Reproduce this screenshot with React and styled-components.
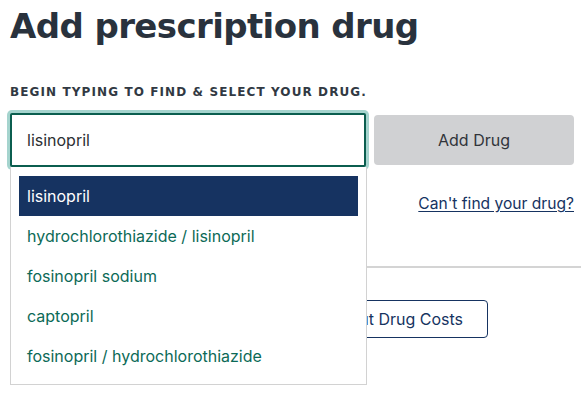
import React from "react";
import styled, { createGlobalStyle } from "styled-components";

const GlobalStyle = createGlobalStyle`
	* {
		box-sizing: border-box;
	}
	body {
		margin: 0;
		background: #fff;
		font-family: "Inter", "Noto Sans", sans-serif;
		overflow: hidden;
	}
`;

const drugs = [
	"lisinopril",
	"hydrochlorothiazide / lisinopril",
	"fosinopril sodium",
	"captopril",
	"fosinopril / hydrochlorothiazide",
];

const App = () => {
	return (
		<Page>
			<GlobalStyle />
			<Heading>Add prescription drug</Heading>
			<FieldLabel>Begin typing to find &amp; select your drug.</FieldLabel>
			<SearchRow>
				<InputWrap>
					<SearchInput defaultValue="lisinopril" />
					<Dropdown>
						{drugs.map((drug, i) => (
							<Option key={drug} $active={i === 0}>
								{drug}
							</Option>
						))}
					</Dropdown>
				</InputWrap>
				<AddButton>Add Drug</AddButton>
			</SearchRow>
			<LinkRow>
				<HelpLink href="#">Can't find your drug?</HelpLink>
			</LinkRow>
			<Divider />
			<ActionRow>
				<OutlineButton>Learn About Drug Costs</OutlineButton>
			</ActionRow>
		</Page>
	);
};

const Page = styled.div`
	width: 581px;
	height: 406px;
	padding: 0 7px 0 10px;
`;

const Heading = styled.h1`
	margin: 0;
	padding-top: 3px;
	font-family: "DejaVu Sans", sans-serif;
	font-weight: 700;
	font-size: 34px;
	line-height: 46px;
	color: #29323d;
	letter-spacing: -0.6px;
`;

const FieldLabel = styled.div`
	margin-top: 35px;
	font-family: "DejaVu Sans", sans-serif;
	font-weight: 700;
	font-size: 12px;
	line-height: 16px;
	letter-spacing: 1.1px;
	text-transform: uppercase;
	color: #313943;
`;

const SearchRow = styled.div`
	display: flex;
	gap: 8px;
	margin-top: 13px;
`;

const InputWrap = styled.div`
	position: relative;
	width: 356px;
`;

const SearchInput = styled.input`
	display: block;
	width: 100%;
	height: 54px;
	padding: 0 15px;
	border: 2px solid #0b5e4f;
	border-radius: 2px;
	box-shadow: 0 0 0 3px #a5d4ce;
	outline: none;
	font-family: "Inter", "Noto Sans", sans-serif;
	font-size: 16px;
	color: #2b2f33;
`;

const Dropdown = styled.ul`
	position: absolute;
	top: 54px;
	left: 0;
	width: 357px;
	margin: 0;
	padding: 9px 8px 8px;
	list-style: none;
	background: #fff;
	border: 1px solid #d2d2d2;
	border-top: none;
	z-index: 2;
`;

const Option = styled.li`
	height: 40px;
	display: flex;
	align-items: center;
	padding: 0 8px;
	font-size: 16px;
	color: ${(p) => (p.$active ? "#fff" : "#0c6a57")};
	background: ${(p) => (p.$active ? "#163361" : "transparent")};
`;

const AddButton = styled.button`
	width: 200px;
	height: 50px;
	margin-top: 2px;
	border: none;
	border-radius: 4px;
	background: #d0d1d3;
	font-family: "Inter", "Noto Sans", sans-serif;
	font-size: 16px;
	color: #30343a;
`;

const LinkRow = styled.div`
	display: flex;
	justify-content: flex-end;
	margin-top: 26px;
`;

const HelpLink = styled.a`
	font-size: 15.6px;
	line-height: 22px;
	color: #163361;
	text-decoration: underline;
	text-underline-offset: 2px;
`;

const Divider = styled.hr`
	margin: 51px -7px 0 0;
	border: none;
	height: 2px;
	background: #d4d4d4;
`;

const ActionRow = styled.div`
	display: flex;
	justify-content: flex-end;
	padding-right: 86px;
	margin-top: 32px;
`;

const OutlineButton = styled.button`
	height: 38px;
	padding: 0 24px;
	border: 1px solid #163361;
	border-radius: 4px;
	background: #fff;
	font-family: "Inter", "Noto Sans", sans-serif;
	font-size: 16px;
	color: #163361;
`;

export default App;
